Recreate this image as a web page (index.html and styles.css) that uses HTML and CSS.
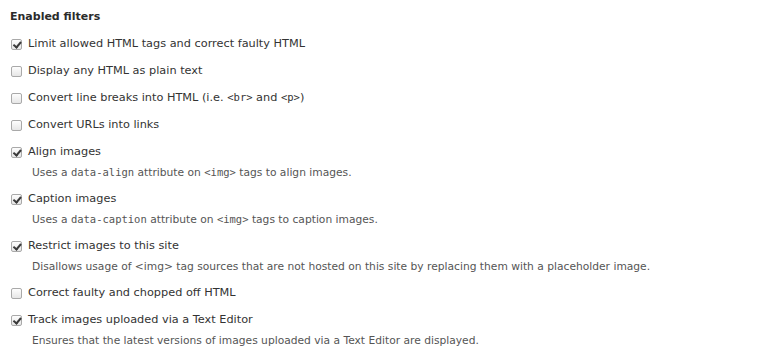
FILE: index.html
```html
<!DOCTYPE html>
<html>
<head>
<meta charset="utf-8">
<link rel="stylesheet" href="styles.css">
</head>
<body>
<div class="filters">
  <h4 class="title">Enabled filters</h4>
  <div class="item"><label class="row"><input type="checkbox" checked><span>Limit allowed HTML tags and correct faulty HTML</span></label></div>
  <div class="item"><label class="row"><input type="checkbox"><span>Display any HTML as plain text</span></label></div>
  <div class="item"><label class="row"><input type="checkbox"><span>Convert line breaks into HTML (i.e. <code>&lt;br&gt;</code> and <code>&lt;p&gt;</code>)</span></label></div>
  <div class="item"><label class="row"><input type="checkbox"><span>Convert URLs into links</span></label></div>
  <div class="item"><label class="row"><input type="checkbox" checked><span>Align images</span></label>
    <div class="desc">Uses a <code>data-align</code> attribute on <code>&lt;img&gt;</code> tags to align images.</div></div>
  <div class="item"><label class="row"><input type="checkbox" checked><span>Caption images</span></label>
    <div class="desc">Uses a <code>data-caption</code> attribute on <code>&lt;img&gt;</code> tags to caption images.</div></div>
  <div class="item"><label class="row"><input type="checkbox" checked><span>Restrict images to this site</span></label>
    <div class="desc">Disallows usage of &lt;img&gt; tag sources that are not hosted on this site by replacing them with a placeholder image.</div></div>
  <div class="item"><label class="row"><input type="checkbox"><span>Correct faulty and chopped off HTML</span></label></div>
  <div class="item"><label class="row"><input type="checkbox" checked><span>Track images uploaded via a Text Editor</span></label>
    <div class="desc">Ensures that the latest versions of images uploaded via a Text Editor are displayed.</div></div>
</div>
</body>
</html>
```
FILE: styles.css
```css
html, body {
  margin: 0;
  padding: 0;
  background: #fff;
}
body {
  font-family: "DejaVu Sans", sans-serif;
  font-size: 11.3px;
  color: #333;
}
.filters {
  padding: 9px 10px;
}
.title {
  margin: 0 0 11px;
  font-size: 11px;
  font-weight: bold;
  color: #2b2b2b;
  line-height: 16px;
}
.item {
  margin-bottom: 11px;
}
.row {
  display: flex;
  align-items: center;
  gap: 6px;
  height: 16px;
  line-height: 16px;
}
.row input {
  -webkit-appearance: none;
  appearance: none;
  margin: 0 0 0 1px;
  width: 11px;
  height: 11px;
  box-sizing: border-box;
  border: 1px solid #a9a9a9;
  border-radius: 2px;
  background: linear-gradient(#fdfdfd, #e6e6e6);
  position: relative;
  flex: none;
}
.row input:checked::after {
  content: "";
  position: absolute;
  left: 2.5px;
  top: 0px;
  width: 2.5px;
  height: 5.5px;
  border: solid #3a3a3a;
  border-width: 0 2px 2px 0;
  transform: rotate(40deg);
}
.desc {
  margin: 5px 0 0 22px;
  font-size: 10.7px;
  line-height: 15px;
  color: #555;
}
code {
  font-family: "DejaVu Sans Mono", monospace;
  font-size: 10.5px;
  line-height: 1;
}
```
